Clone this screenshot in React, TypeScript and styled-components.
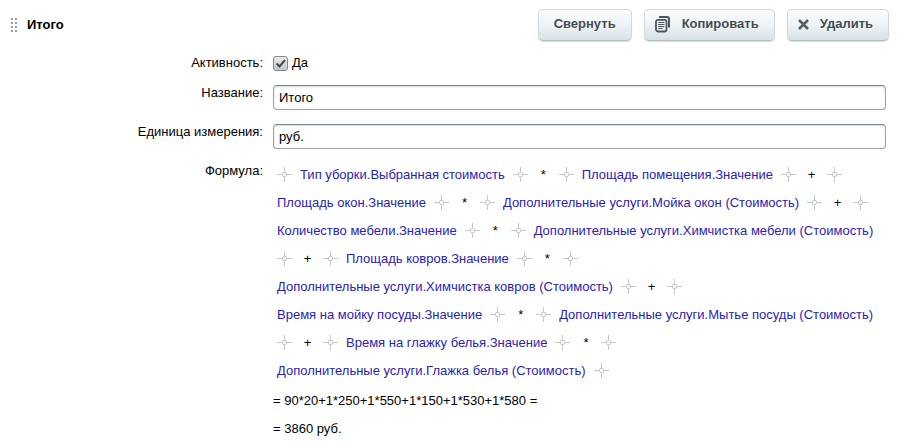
import React, { useState } from "react";
import styled, { createGlobalStyle } from "styled-components";

const GlobalStyle = createGlobalStyle`
  *, *::before, *::after { box-sizing: border-box; }
  body {
    margin: 0;
    background: #fff;
    color: #000;
    font: 13px/16px "Liberation Sans", Arial, sans-serif;
  }
`;

const Page = styled.main`
  padding: 9px 8px 0 10px;
`;

const Header = styled.header`
  display: flex;
  align-items: center;
  gap: 9px;
  height: 32px;
`;

const DragHandle = styled.svg`
  flex: none;
  display: block;
`;

const Title = styled.h1`
  flex: 1;
  margin: 0;
  font-size: 13px;
  line-height: 30px;
  font-weight: bold;
`;

const Toolbar = styled.div`
  display: flex;
  gap: 12px;
`;

const ToolButton = styled.button`
  display: flex;
  align-items: center;
  gap: 11px;
  height: 32px;
  padding: 0 15px 2px 10px;
  border: 1px solid #d0d8db;
  border-bottom-color: #b3bdc1;
  border-radius: 5px;
  background: linear-gradient(#fbfcfd, #eef3f5 50%, #d7e2e6);
  box-shadow: 0 1px 1px rgba(0, 0, 0, 0.15), inset 0 1px 0 #fff;
  color: #3f4b54;
  font: bold 13px/18px "Liberation Sans", Arial, sans-serif;
  text-shadow: 0 1px 0 #fff;
  cursor: pointer;

  &:first-child { padding-left: 15px; }
`;

const Fields = styled.form`
  display: grid;
  grid-template-columns: 253px 1fr;
  column-gap: 10px;
  row-gap: 14px;
  padding: 14px 3px 0 0;
`;

const Label = styled.label`
  text-align: right;
`;

const FormulaLabel = styled.div`
  text-align: right;
`;

const CheckLine = styled.div`
  display: flex;
  align-items: center;
  gap: 4px;
  height: 16px;
`;

const Check = styled.input`
  appearance: none;
  flex: none;
  width: 15px;
  height: 15px;
  margin: 0;
  border: 1px solid #85898c;
  border-radius: 3px;
  background: linear-gradient(#eceded, #c4c8ca);
`;

const CheckBox = styled.span`
  display: grid;

  > * { grid-area: 1 / 1; }
  > svg { pointer-events: none; }
`;

const TextInput = styled.input`
  width: 100%;
  height: 25px;
  padding: 0 5px;
  border: 1px solid #9aa2a7;
  border-top-color: #7d868b;
  border-radius: 4px;
  background: #fff;
  box-shadow: inset 0 1px 2px rgba(110, 130, 140, 0.3);
  color: #000;
  font: inherit;
  outline: none;
`;

const FormulaBlock = styled.div`
  margin-top: -2px;
`;

const Formula = styled.div`
  display: flex;
  flex-wrap: wrap;
  column-gap: 8px;
  padding: 0 4px;
  line-height: 28px;
`;

const Variable = styled.a`
  color: #2b22b5;
  text-decoration: none;
  white-space: nowrap;
`;

const Operator = styled.span`
  width: 15px;
  text-align: center;
`;

const Slot = styled.svg`
  flex: none;
  align-self: flex-start;
  display: block;
  margin-top: 6px;
`;

const Result = styled.p`
  margin: 0;
  line-height: 28px;

  &:first-of-type { margin-top: 2px; }
`;

const CopyIcon = () => (
  <svg width="16" height="18" viewBox="0 0 16 18" fill="none" stroke="#4c575d" aria-hidden="true">
    <path d="M4 2h8a2 2 0 0 1 2 2v8.5" strokeWidth="2" />
    <rect x="1" y="4.8" width="10.5" height="11.7" rx="2" strokeWidth="1.8" fill="#f2f5f6" />
    <path d="M3.2 7.5h6.2M3.2 9.5h6.2M3.2 11.5h6.2M3.2 13.5h4.5" />
  </svg>
);

const CloseIcon = () => (
  <svg width="11" height="11" viewBox="0 0 11 11" stroke="#555f64" strokeWidth="2.6" aria-hidden="true">
    <path d="M1 1l9 9M10 1l-9 9" />
  </svg>
);

const InsertPoint = () => (
  <Slot width="15" height="15" viewBox="0 0 15 15" fill="none" stroke="#c6caca" aria-hidden="true">
    <path d="M7.5 0v5M7.5 10v5M0 7.5h5M10 7.5h5" />
    <circle cx="7.5" cy="7.5" r="2.2" stroke="#bcc0c0" />
  </Slot>
);

const tokens = [
  "Тип уборки.Выбранная стоимость", "*",
  "Площадь помещения.Значение", "+",
  "Площадь окон.Значение", "*",
  "Дополнительные услуги.Мойка окон (Стоимость)", "+",
  "Количество мебели.Значение", "*",
  "Дополнительные услуги.Химчистка мебели (Стоимость)", "+",
  "Площадь ковров.Значение", "*",
  "Дополнительные услуги.Химчистка ковров (Стоимость)", "+",
  "Время на мойку посуды.Значение", "*",
  "Дополнительные услуги.Мытье посуды (Стоимость)", "+",
  "Время на глажку белья.Значение", "*",
  "Дополнительные услуги.Глажка белья (Стоимость)",
];

export default function App() {
  const [active, setActive] = useState(true);

  return (
    <Page>
      <GlobalStyle />
      <Header>
        <DragHandle width="8" height="14" viewBox="0 0 8 14" fill="#9c9ea3" aria-hidden="true">
          {[0, 4, 8, 12].map((y) => (
            <path key={y} d={`M1 ${y}h2v2h-2zM5 ${y}h2v2h-2z`} />
          ))}
        </DragHandle>
        <Title>Итого</Title>
        <Toolbar>
          <ToolButton type="button">Свернуть</ToolButton>
          <ToolButton type="button"><CopyIcon />Копировать</ToolButton>
          <ToolButton type="button"><CloseIcon />Удалить</ToolButton>
        </Toolbar>
      </Header>
      <Fields>
        <Label htmlFor="active">Активность:</Label>
        <CheckLine>
          <CheckBox>
            <Check id="active" type="checkbox" checked={active} onChange={(e) => setActive(e.target.checked)} />
            {active && (
              <svg width="15" height="15" viewBox="0 0 15 15" fill="none" stroke="#434a4f" strokeWidth="2" aria-hidden="true">
                <path d="M3.5 7.5l3 3 5.5-6.5" />
              </svg>
            )}
          </CheckBox>
          <label htmlFor="active">Да</label>
        </CheckLine>
        <Label htmlFor="name">Название:</Label>
        <TextInput id="name" type="text" defaultValue="Итого" />
        <Label htmlFor="unit">Единица измерения:</Label>
        <TextInput id="unit" type="text" defaultValue="руб." />
        <FormulaLabel id="formula-label">Формула:</FormulaLabel>
        <FormulaBlock role="group" aria-labelledby="formula-label">
          <Formula>
            <InsertPoint />
            {tokens.map((token, i) => (
              <React.Fragment key={i}>
                {token.length > 1 ? <Variable href="#">{token}</Variable> : <Operator>{token}</Operator>}
                <InsertPoint />
              </React.Fragment>
            ))}
          </Formula>
          <Result>= 90*20+1*250+1*550+1*150+1*530+1*580 =</Result>
          <Result>= 3860 руб.</Result>
        </FormulaBlock>
      </Fields>
    </Page>
  );
}
